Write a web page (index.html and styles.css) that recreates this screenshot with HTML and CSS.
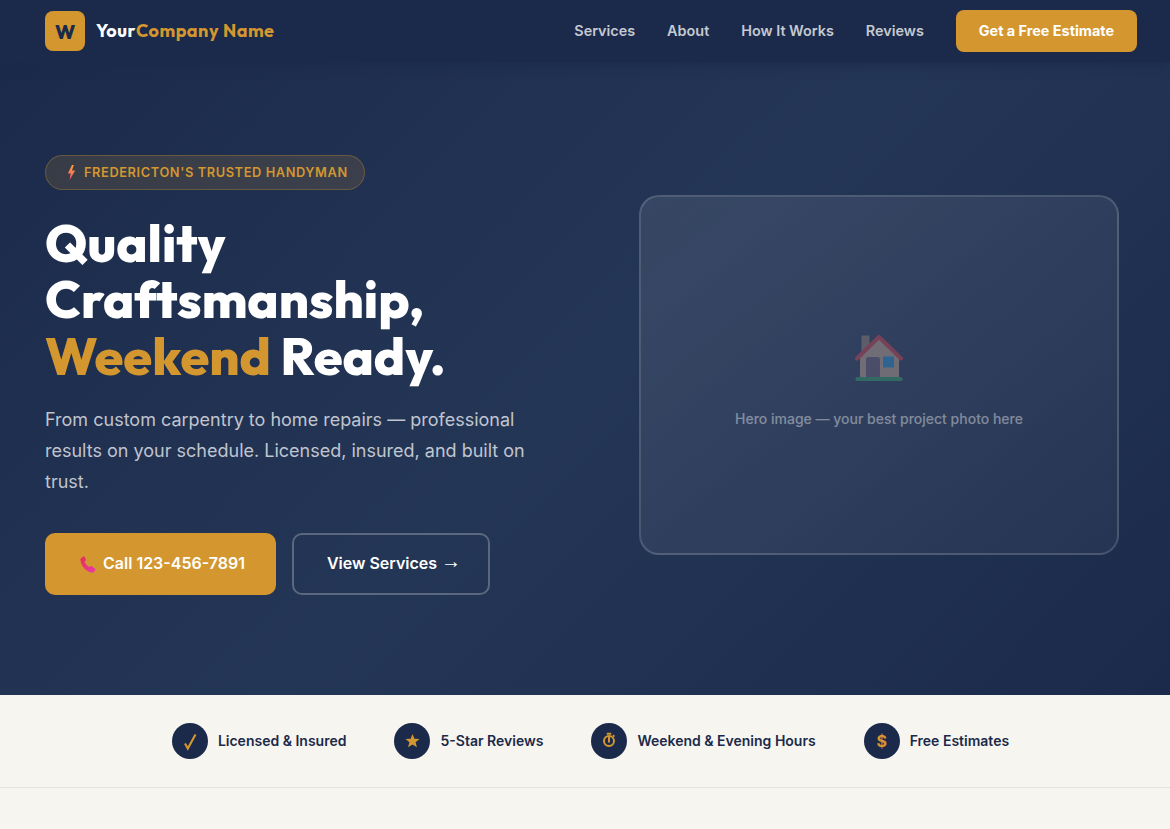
FILE: index.html
```html
<!DOCTYPE html>
<html lang="en">
<head>
<meta charset="utf-8">
<title>YourCompany Name</title>
<link rel="stylesheet" href="styles.css">
</head>
<body>
<nav class="nav">
  <a class="brand" href="#"><span class="brand-mark">W</span><span class="brand-name">Your<span class="accent">Company Name</span></span></a>
  <div class="nav-links">
    <a href="#">Services</a>
    <a href="#">About</a>
    <a href="#">How It Works</a>
    <a href="#">Reviews</a>
    <a href="#" class="nav-cta">Get a Free Estimate</a>
  </div>
</nav>
<header class="hero">
  <div class="hero-copy">
    <div class="badge">
      <svg class="badge-icon" viewBox="0 0 9 15" aria-hidden="true">
        <defs><linearGradient id="bolt" x1="0" y1="0" x2="0" y2="1"><stop offset="0" stop-color="#fba33a"/><stop offset="1" stop-color="#f0566a"/></linearGradient></defs>
        <polygon points="5,0 .8,8.5 3.6,8.5 2.6,15 8.2,5.6 5,5.6 6.8,0" fill="url(#bolt)"/>
      </svg>
      <span class="badge-text">FREDERICTON'S TRUSTED HANDYMAN</span>
    </div>
    <h1>Quality Craftsmanship, <span class="accent">Weekend</span> Ready.</h1>
    <p class="lead">From custom carpentry to home repairs — professional results on your schedule. Licensed, insured, and built on trust.</p>
    <div class="actions">
      <a href="#" class="btn btn-primary">
        <svg class="phone-icon" viewBox="0 0 17 17" aria-hidden="true">
          <defs><linearGradient id="phone" x1="0" y1="0" x2="1" y2="1"><stop offset="0" stop-color="#e62f55"/><stop offset="1" stop-color="#e83cab"/></linearGradient></defs>
          <path d="M1 2.2 3.2.6c.6-.4 1.2-.3 1.5.3l1.2 2.6c.2.5.1 1-.3 1.3l-1 .8c.8 2.3 2.4 4.2 4.8 5.5l1-.8c.4-.3.9-.3 1.3 0l3.3 2.1c.6.4.7 1.1.3 1.6l-1.3 2c-.4.6-1 .9-1.7.8C6.500 15.800 1 10.500.4 3.800.3 3.100.5 2.600 1 2.200Z" fill="url(#phone)"/>
        </svg>Call 123-456-7891</a>
      <a href="#" class="btn btn-ghost">View Services <span class="arrow">→</span></a>
    </div>
  </div>
  <div class="hero-visual">
    <div class="visual-inner">
      <div class="visual-icon">
        <svg class="house" viewBox="0 0 48 48" aria-hidden="true">
          <rect x="6.500" y="1.500" width="8" height="18" fill="#a08a7e"/>
          <polygon points="5,23 24,5 44,23 44,44 5,44" fill="#d2b29e"/>
          <path d="M11 44V25.500c0-1.400 1-2.500 2.400-2.500h9.200c1.400 0 2.400 1.100 2.400 2.500V44Z" fill="#75637c"/>
          <rect x="28" y="22.500" width="11" height="11" fill="#2f9be2"/>
          <polyline points="2,24.500 24,3 46,24.500" fill="none" stroke="#e2474f" stroke-width="4" stroke-linecap="round" stroke-linejoin="round"/>
          <rect x=".5" y="43" width="47" height="4" rx="1.500" fill="#39ab6e"/>
        </svg>
      </div>
      <div class="visual-text">Hero image — your best project photo here</div>
    </div>
  </div>
</header>
<section class="trust">
  <div class="trust-item"><span class="trust-icon">
    <svg class="glyph" viewBox="0 0 36 36" aria-hidden="true"><path d="M13 20.500 15.800 25.500 23.500 11.500" fill="none" stroke="currentColor" stroke-width="2.100"/></svg>
  </span>Licensed &amp; Insured</div>
  <div class="trust-item"><span class="trust-icon">
    <svg class="glyph" viewBox="0 0 36 36" aria-hidden="true"><polygon points="18.500,11 20.400,15.700 25.500,16.100 21.600,19.300 22.900,24.300 18.500,21.600 14.100,24.300 15.400,19.300 11.500,16.100 16.600,15.700" fill="currentColor"/></svg>
  </span>5-Star Reviews</div>
  <div class="trust-item"><span class="trust-icon">
    <svg class="glyph" viewBox="0 0 36 36" aria-hidden="true"><g fill="none" stroke="currentColor" stroke-width="2"><circle cx="18" cy="18" r="5"/><path d="M18 19.500V13M15.800 10.800h4.400M22 13.500l1.300-1.300"/></g></svg>
  </span>Weekend &amp; Evening Hours</div>
  <div class="trust-item"><span class="trust-icon dollar">$</span>Free Estimates</div>
</section>
</body>
</html>
```
FILE: styles.css
```css
* { box-sizing: border-box; margin: 0; padding: 0; }
html, body { height: 100%; }
body { background: #f7f5f0; font-family: Inter, "Liberation Sans", sans-serif; line-height: 1.6; color: #1b2a4a; overflow: hidden; }
a { text-decoration: none; color: inherit; }
.accent { color: #d4972f; }

.nav { position: relative; z-index: 1; height: 62px; background: #1b2a4a; box-shadow: 0 3px 10px rgba(27,42,74,.9); display: flex; align-items: center; justify-content: space-between; padding: 0 33px 0 45px; }
.brand { display: flex; align-items: center; gap: 11px; }
.brand-mark { width: 40px; height: 40px; border-radius: 8px; background: #d4972f; color: #1b2a4a; display: flex; align-items: center; justify-content: center; font: 800 20px Outfit, Lato, sans-serif; }
.brand-name { font: 700 18px/1 Outfit, Lato, sans-serif; letter-spacing: .5px; color: #fff; }
.nav-links { display: flex; align-items: center; gap: 32px; font-size: 14.4px; font-weight: 600; line-height: 1; color: rgba(255,255,255,.75); }
.nav-cta { background: #d4972f; color: #fff; font-weight: 700; padding: 0 23px; height: 42px; line-height: 42px; border-radius: 8px; }

.hero { height: 633px; background: linear-gradient(135deg, #1b2a4a 0%, #243656 50%, #1b2a4a 100%); display: grid; grid-template-columns: 1fr 480px; padding: 0 51px 7px 45px; align-items: center; }
.badge { display: inline-flex; align-items: center; gap: 8px; height: 35px; padding: 0 16px 0 21px; border-radius: 100px; background: rgba(212,151,47,.15); border: 1px solid rgba(212,151,47,.3); color: #d4972f; font-size: 12.8px; font-weight: 600; letter-spacing: .6px; }
.badge-text { padding-top: 2px; }
.badge-icon { width: 9px; height: 15px; }
h1 { font: 800 52px/56.5px Outfit, Lato, sans-serif; color: #fff; margin: 25px 0 21px; max-width: 500px; }
.lead { font-size: 18px; line-height: 30.6px; color: rgba(255,255,255,.72); margin-bottom: 36px; max-width: 485px; }
.actions { display: flex; gap: 16px; }
.btn { display: flex; align-items: center; height: 62px; border-radius: 10px; font-size: 16px; font-weight: 600; color: #fff; white-space: pre; }
.btn-primary { background: #d4972f; padding: 0 31px 0 35px; }
.btn-ghost { border: 2px solid rgba(255,255,255,.25); padding: 0 27px 0 33px; }
.phone-icon { width: 17px; height: 17px; margin-right: 6px; }
.arrow { font-family: "Liberation Sans", sans-serif; font-size: 20px; font-weight: 400; transform: translateY(-3px); }

.hero-visual { height: 360px; border-radius: 20px; background: linear-gradient(145deg, rgba(255,255,255,.09), rgba(255,255,255,.04)); border: 2px solid rgba(255,255,255,.15); display: flex; align-items: center; justify-content: center; }
.visual-inner { text-align: center; opacity: .4; }
.visual-icon { height: 76.8px; margin-bottom: 12px; display: flex; align-items: center; justify-content: center; }
.house { width: 48px; height: 48px; }
.visual-text { font-size: 14px; font-weight: 500; color: #fff; }

.trust { height: 93px; display: flex; align-items: center; justify-content: center; gap: 48px; padding-left: 11px; border-bottom: 1px solid #e5e3de; }
.trust-item { display: flex; align-items: center; gap: 10px; font-size: 14px; font-weight: 600; color: #1b2a4a; }
.trust-icon { width: 36px; height: 36px; border-radius: 50%; background: #1b2a4a; color: #d4972f; display: flex; align-items: center; justify-content: center; font-size: 16px; font-weight: 700; }
.dollar { padding-top: 1px; }
.glyph { width: 36px; height: 36px; }
```
